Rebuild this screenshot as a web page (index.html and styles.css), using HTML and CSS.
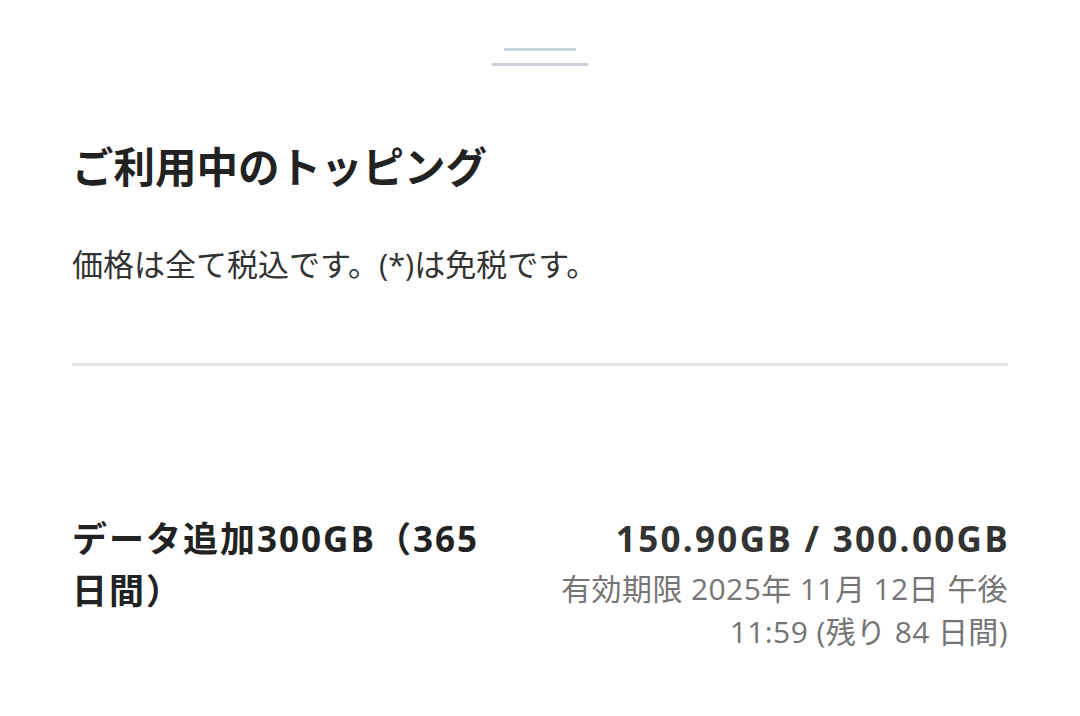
FILE: index.html
```html
<!DOCTYPE html>
<html lang="ja">

<head>
    <meta charset="UTF-8">
    <meta name="viewport" content="width=device-width, initial-scale=1.0">
    <title>ご利用中のトッピング</title>
    <link rel="stylesheet" href="styles.css">
</head>

<body>
    <div class="sheet">
        <div class="handle">
            <span class="handle-line short"></span>
            <span class="handle-line long"></span>
        </div>

        <div class="sheet-header">
            <h1>ご利用中のトッピング</h1>
            <p class="note">価格は全て税込です。(*)は免税です。</p>
        </div>

        <hr class="divider">

        <ul class="topping-list">
            <li class="topping-item">
                <div class="topping-name">データ追加300GB（365日間）</div>
                <div class="topping-usage">
                    <div class="usage-amount">150.90GB / 300.00GB</div>
                    <div class="usage-expiry">有効期限 2025年 11月 12日 午後 11:59 (残り 84 日間)</div>
                </div>
            </li>
        </ul>
    </div>
</body>

</html>
```

FILE: styles.css
```css
body {
    font-family: "Open Sans", "Noto Sans CJK JP", sans-serif;
    background-color: #fff;
    color: #222;
    margin: 0;
    padding: 0;
}

.sheet {
    padding: 0 72px;
}

.handle {
    display: flex;
    flex-direction: column;
    align-items: center;
    gap: 12px;
    padding-top: 48px;
}

.handle-line {
    display: block;
    height: 3px;
    background-color: #ccd2d9;
}

.handle-line.short {
    width: 72px;
}

.handle-line.long {
    width: 96px;
}

.sheet-header h1 {
    font-size: 41.5px;
    line-height: 56px;
    font-weight: bold;
    margin: 73px 0 0;
}

.note {
    font-size: 31px;
    line-height: 45px;
    color: #333;
    margin: 47px 0 0;
}

.divider {
    border: none;
    height: 3px;
    background-color: #e1e4e9;
    margin: 76px 0 0;
}

.topping-list {
    list-style: none;
    margin: 147px 0 0;
    padding: 0;
}

.topping-item {
    display: flex;
    gap: 48px;
}

.topping-name {
    flex: 1;
    min-width: 0;
    font-size: 35px;
    line-height: 52px;
    font-weight: bold;
    letter-spacing: 2px;
}

.topping-usage {
    flex: 0 0 468px;
    text-align: right;
}

.usage-amount {
    font-size: 35px;
    line-height: 51px;
    font-weight: bold;
    letter-spacing: 2.3px;
    margin-right: -2px;
    color: #333;
}

.usage-expiry {
    margin-top: 3px;
    font-size: 30px;
    line-height: 43px;
    letter-spacing: 0.4px;
    color: #757575;
}
```
